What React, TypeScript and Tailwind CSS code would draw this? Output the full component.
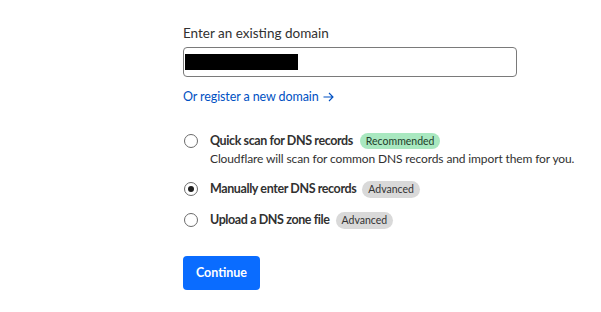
import React from "react";

function Radio({ checked }: { checked?: boolean }) {
  return (
    <span className="flex h-[14px] w-[14px] shrink-0 items-center justify-center rounded-full border border-[#6b6b6b] bg-white">
      {checked && <span className="h-[6px] w-[6px] rounded-full bg-[#1f1f1f]" />}
    </span>
  );
}

function Badge({ children, green }: { children: React.ReactNode; green?: boolean }) {
  return (
    <span
      className={
        green
          ? "ml-[7px] inline-flex h-[16px] items-center rounded-full bg-[#a9e8c0] px-[6px] text-[10.5px] font-normal leading-none tracking-normal text-[#1d3d2a]"
          : "ml-[6px] inline-flex h-[17px] items-center rounded-full bg-[#d9d9d9] px-[6px] text-[10.5px] font-normal leading-none tracking-normal text-[#333333]"
      }
    >
      {children}
    </span>
  );
}

export default function App() {
  return (
    <div
      className="h-[312px] w-[601px] whitespace-nowrap bg-white pl-[183px] pt-[24px] text-[#313131]"
      style={{ fontFamily: 'Lato, "Noto Sans", sans-serif' }}
    >
      <div className="text-[13.5px] leading-[18px]">Enter an existing domain</div>
      <div className="mt-[5px] flex h-[30px] w-[334px] items-center rounded-[4px] border border-[#7a7a7a] px-[1px]">
        <div className="h-[16px] w-[113px] bg-black" />
      </div>
      <a className="mt-[11px] flex items-center text-[12.5px] leading-[18px] tracking-[-0.1px] text-[#0051c3]" href="#">
        Or register a new domain
        <svg className="ml-[4px]" width="11" height="10" viewBox="0 0 11 10" fill="none" stroke="#0051c3" strokeWidth="1.1">
          <path d="M0.5 5H10M6 1L10 5L6 9" />
        </svg>
      </a>

      <div className="mt-[26px] flex items-start">
        <div className="flex h-[18px] w-[27px] items-center pl-[1px]">
          <Radio />
        </div>
        <div>
          <div className="flex h-[18px] items-center text-[12.5px] font-bold leading-[18px] tracking-[-0.4px]">
            Quick scan for DNS records
            <Badge green>Recommended</Badge>
          </div>
          <div className="text-[12px] leading-[18px] tracking-[-0.12px]">
            Cloudflare will scan for common DNS records and import them for you.
          </div>
        </div>
      </div>

      <div className="mt-[12px] flex items-center">
        <div className="flex h-[18px] w-[27px] items-center pl-[1px]">
          <Radio checked />
        </div>
        <div className="flex h-[18px] items-center text-[12.5px] font-bold leading-[18px] tracking-[-0.4px]">
          Manually enter DNS records
          <Badge>Advanced</Badge>
        </div>
      </div>

      <div className="mt-[13px] flex items-center">
        <div className="flex h-[18px] w-[27px] items-center pl-[1px]">
          <Radio />
        </div>
        <div className="flex h-[18px] items-center text-[12.5px] font-bold leading-[18px] tracking-[-0.4px]">
          Upload a DNS zone file
          <Badge>Advanced</Badge>
        </div>
      </div>

      <button className="mt-[27px] flex h-[34px] w-[77px] items-center justify-center rounded-[4px] bg-[#0a6cff] text-[12.5px] font-bold text-white">
        Continue
      </button>
    </div>
  );
}
